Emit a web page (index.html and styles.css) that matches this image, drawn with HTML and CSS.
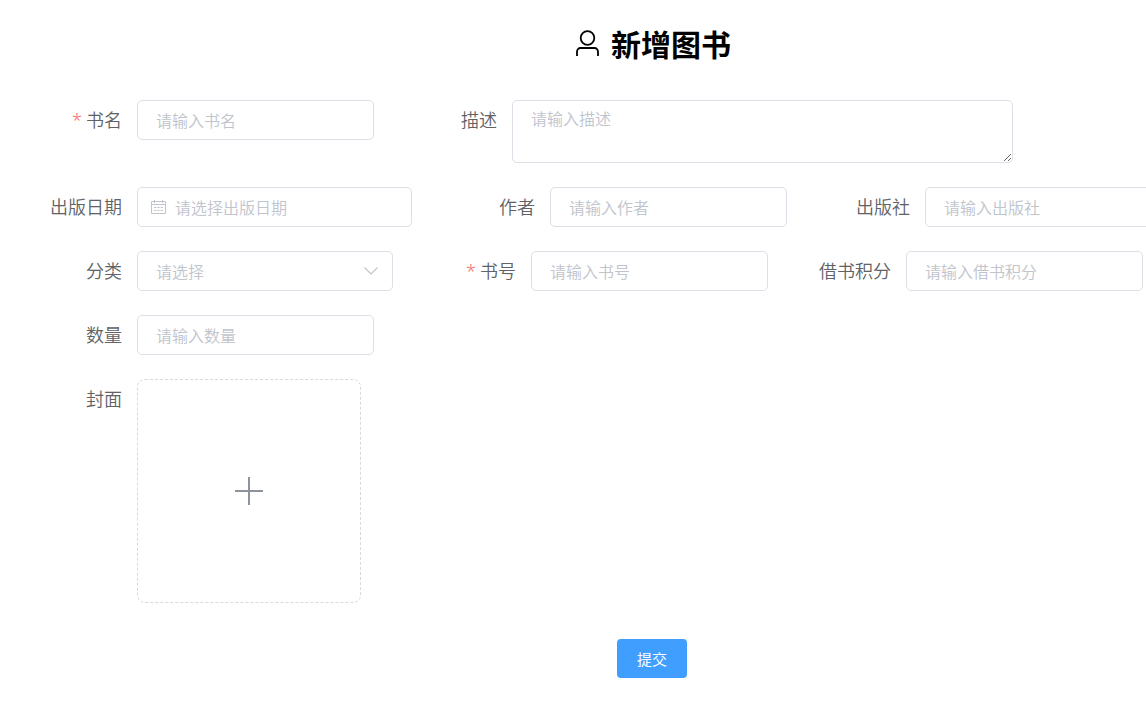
FILE: index.html
```html
<!DOCTYPE html>
<html lang="zh-CN">
  <head>
    <meta charset="UTF-8" />
    <meta name="viewport" content="width=device-width, initial-scale=1.0" />
    <title>新增图书</title>
    <link rel="stylesheet" href="styles.css">
  </head>
  <body>
    <main class="page">
      <h1 class="page-title">
        <svg class="title-icon" viewBox="0 0 30 30" aria-hidden="true">
          <circle cx="14.5" cy="10" r="6.8" />
          <path d="M4 28v-4.500a3.500 3.500 0 0 1 3.500-3.500h14a3.500 3.500 0 0 1 3.500 3.500v4.500" />
        </svg>
        新增图书
      </h1>

      <form class="book-form">
        <div class="form-row">
          <div class="form-item">
            <label class="form-label required" for="name">书名</label>
            <input class="control" id="name" type="text" placeholder="请输入书名" />
          </div>
          <div class="form-item">
            <label class="form-label" for="description">描述</label>
            <textarea class="control textarea" id="description" placeholder="请输入描述"></textarea>
          </div>
        </div>

        <div class="form-row">
          <div class="form-item">
            <label class="form-label" for="date">出版日期</label>
            <div class="control date-box">
              <svg class="date-icon" viewBox="0 0 16 16" aria-hidden="true">
                <path d="M1.5 2.500h14v12h-14zM1.500 5.500h14M4.500 1v3M12.500 1v3" />
                <path d="M4 8.500h9M4 11.500h9" stroke-dasharray="2.300 1" />
              </svg>
              <input class="date-input" id="date" type="text" placeholder="请选择出版日期" />
            </div>
          </div>
          <div class="form-item">
            <label class="form-label" for="author">作者</label>
            <input class="control" id="author" type="text" placeholder="请输入作者" />
          </div>
          <div class="form-item">
            <label class="form-label" for="publisher">出版社</label>
            <input class="control" id="publisher" type="text" placeholder="请输入出版社" />
          </div>
        </div>

        <div class="form-row">
          <div class="form-item">
            <label class="form-label" for="category">分类</label>
            <div class="select-box">
              <select class="control select" id="category">
                <option value="">请选择</option>
              </select>
              <svg class="select-arrow" viewBox="0 0 16 16" aria-hidden="true">
                <path d="M1.500 4.500l6.500 6.500 6.500-6.500" />
              </svg>
            </div>
          </div>
          <div class="form-item">
            <label class="form-label required" for="isbn">书号</label>
            <input class="control" id="isbn" type="text" placeholder="请输入书号" />
          </div>
          <div class="form-item">
            <label class="form-label" for="score">借书积分</label>
            <input class="control" id="score" type="text" placeholder="请输入借书积分" />
          </div>
        </div>

        <div class="form-row">
          <div class="form-item">
            <label class="form-label" for="nums">数量</label>
            <input class="control" id="nums" type="text" placeholder="请输入数量" />
          </div>
        </div>

        <div class="form-row">
          <div class="form-item">
            <label class="form-label" for="cover">封面</label>
            <label class="uploader">
              <input class="uploader-input" id="cover" type="file" accept="image/*" />
              <svg class="uploader-icon" viewBox="0 0 30 30" aria-hidden="true">
                <path d="M15 1v28M1 15h28" />
              </svg>
            </label>
          </div>
        </div>

        <div class="form-footer">
          <button class="submit-button" type="submit">提交</button>
        </div>
      </form>
    </main>
  </body>
</html>
```
FILE: styles.css
```css
* {
  box-sizing: border-box;
}

body {
  margin: 0;
  overflow-x: hidden;
  background: #fff;
  color: #606266;
  font-family: "Noto Sans CJK SC", sans-serif;
}

/* three fields in a row need more room than a small window has */
.page {
  min-width: 1304px;
  padding: 20px 0;
}

.page-title {
  display: flex;
  align-items: center;
  justify-content: center;
  gap: 8px;
  margin: 0 0 34px;
  color: #000;
  font-size: 30px;
  font-weight: 700;
  line-height: 46px;
}

.title-icon {
  width: 30px;
  height: 30px;
  fill: none;
  stroke: #000;
  stroke-width: 1.8;
}

.book-form {
  display: flex;
  flex-direction: column;
  gap: 24px;
}

.form-row {
  display: flex;
  gap: 1px;
}

.form-item {
  display: flex;
  align-items: flex-start;
}

.form-label {
  width: 137px;
  padding-right: 15px;
  font-size: 18px;
  font-weight: 350;
  line-height: 38px;
  text-align: right;
}

.required::before {
  content: "*";
  margin-right: 4px;
  color: #f56c6c;
  font-family: "Noto Sans", sans-serif;
  line-height: 1;
}

.control {
  width: 237px;
  height: 40px;
  padding: 0 18px;
  border: 1px solid #dcdfe6;
  border-radius: 5px;
  background: #fff;
  color: #606266;
  font-family: inherit;
  font-size: 16px;
  font-weight: 350;
  outline: none;
}

.control:focus,
.control:focus-within {
  border-color: #409eff;
}

.control::placeholder,
.date-input::placeholder {
  color: #c0c4cc;
}

.textarea {
  width: 501px;
  height: 63px;
  padding-top: 5px;
  line-height: 24px;
  resize: vertical;
}

.date-box {
  display: flex;
  align-items: center;
  gap: 9px;
  width: 275px;
  padding: 0 12px;
}

.date-icon {
  width: 16px;
  height: 16px;
  flex-shrink: 0;
  fill: none;
  stroke: #c0c4cc;
}

.date-input {
  flex: 1;
  min-width: 0;
  padding: 0;
  border: none;
  font: inherit;
  color: inherit;
  outline: none;
}

.select-box {
  display: grid;
  align-items: center;
}

.select {
  grid-area: 1 / 1;
  width: 256px;
  color: #c0c4cc;
  appearance: none;
}

.select-arrow {
  grid-area: 1 / 1;
  justify-self: end;
  width: 16px;
  height: 16px;
  margin-right: 14px;
  fill: none;
  stroke: #c0c4cc;
  stroke-width: 1.2;
  pointer-events: none;
}

.uploader {
  display: flex;
  align-items: center;
  justify-content: center;
  width: 224px;
  height: 224px;
  border: 1px dashed #d9d9d9;
  border-radius: 8px;
  cursor: pointer;
}

.uploader:hover {
  border-color: #409eff;
}

.uploader-input {
  position: absolute;
  width: 1px;
  height: 1px;
  opacity: 0;
}

.uploader-icon {
  width: 30px;
  height: 30px;
  fill: none;
  stroke: #8c939d;
  stroke-width: 2;
}

.form-footer {
  display: flex;
  justify-content: center;
  padding-top: 12px;
}

.submit-button {
  padding: 0 20px;
  border: none;
  border-radius: 4px;
  background: #409eff;
  color: #fff;
  font-family: inherit;
  font-size: 15px;
  line-height: 39px;
  cursor: pointer;
}

.submit-button:hover {
  background: #66b1ff;
}
```
